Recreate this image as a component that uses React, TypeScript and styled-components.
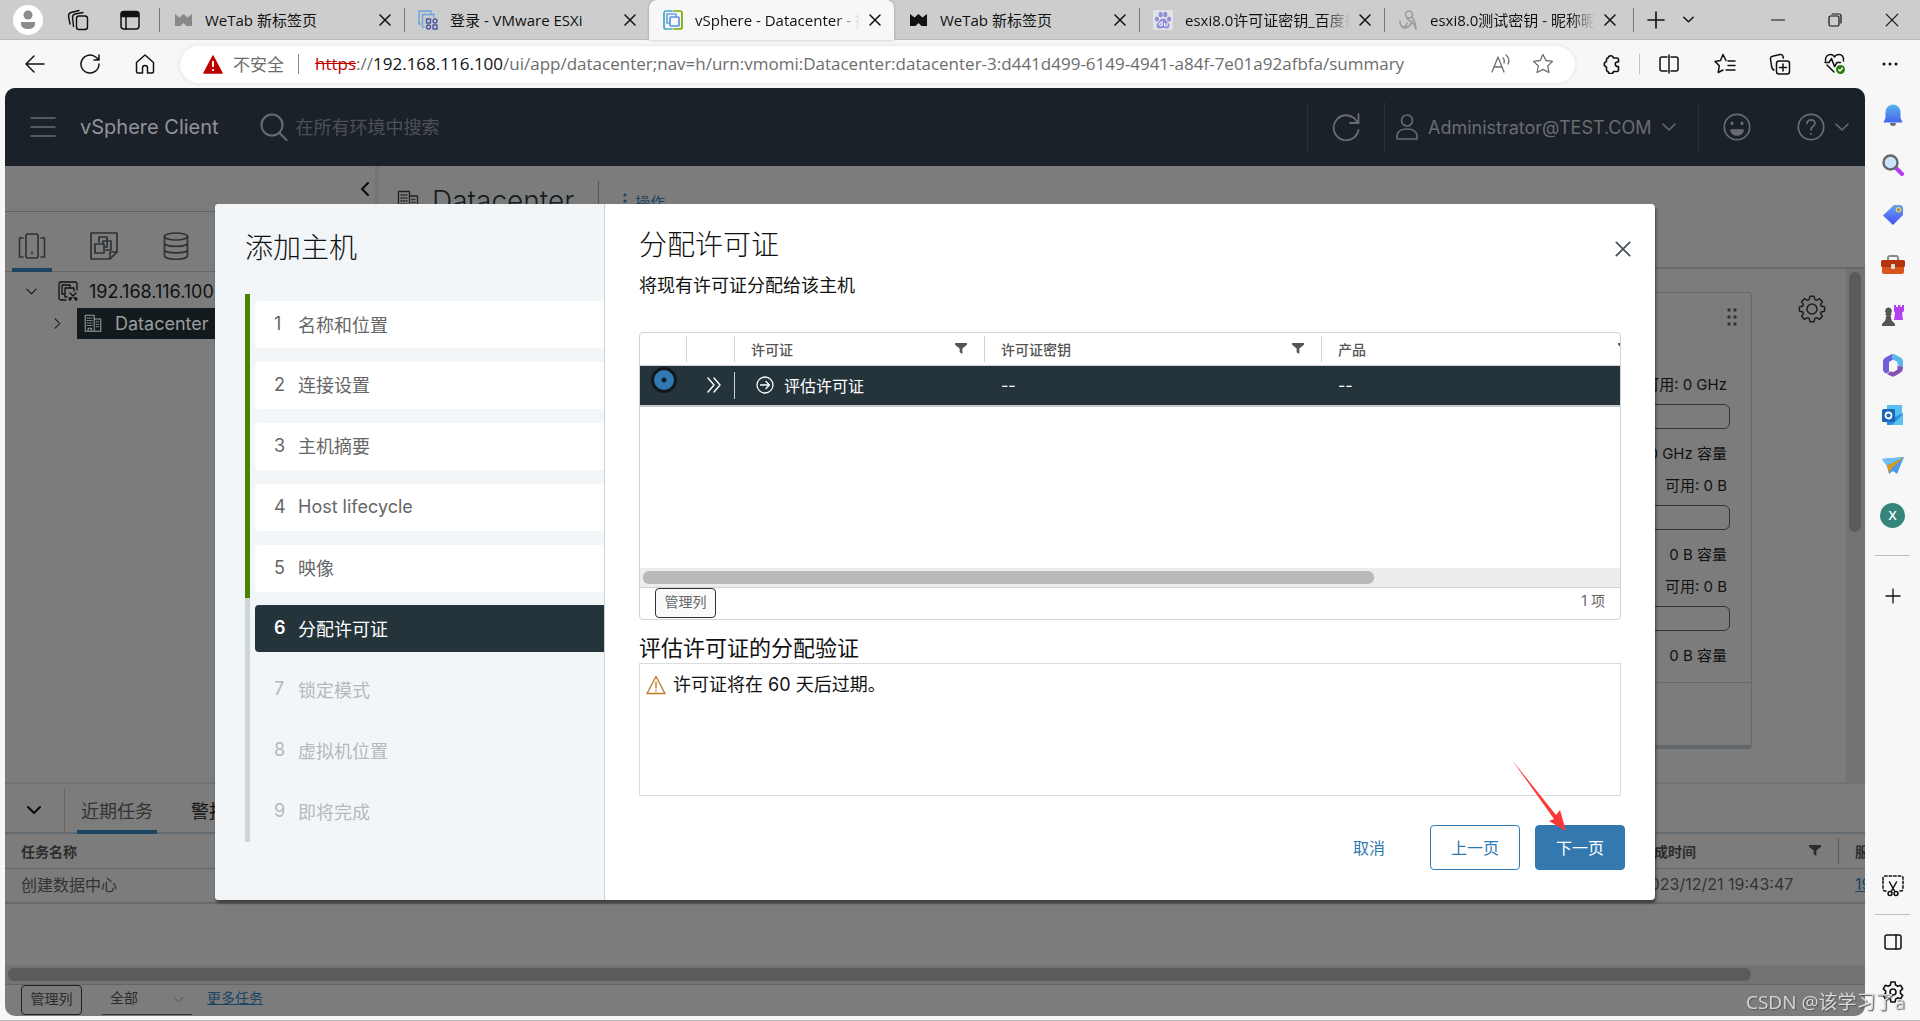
import React from 'react';
import styled, { createGlobalStyle, css } from 'styled-components';

const uiFont = '"Open Sans", "Noto Sans CJK SC", sans-serif';
const appFont = 'Inter, "Noto Sans CJK SC", sans-serif';

const Global = createGlobalStyle`
  * { box-sizing: border-box; }
  html, body { margin: 0; height: 100%; }
  #root { height: 100%; }
  button, input, select { font: inherit; color: inherit; margin: 0; }
  h1, h2, h3, p, ul, ol { margin: 0; padding: 0; font-weight: 400; }
  ul, ol { list-style: none; }
`;

/* ---------- icons ---------- */

type IcoProps = { s?: number; h?: number; sw?: number; vb?: string; children: React.ReactNode };
const Ico = ({ s = 24, h, sw = 1.5, vb = '0 0 24 24', children }: IcoProps) => (
  <svg width={s} height={h ?? s} viewBox={vb} fill="none" stroke="currentColor" strokeWidth={sw}
    strokeLinecap="round" strokeLinejoin="round" aria-hidden="true">{children}</svg>
);

const Close = ({ s = 12, sw = 1.5 }: { s?: number; sw?: number }) => (
  <Ico s={s} sw={sw} vb="0 0 12 12"><path d="M1 1l10 10M11 1L1 11" /></Ico>
);
const Down = ({ s = 14, sw = 1.5 }: { s?: number; sw?: number }) => (
  <Ico s={s} sw={sw} vb="0 0 14 14"><path d="M1 4l6 6 6-6" /></Ico>
);
const Funnel = () => (
  <svg width="12" height="11" viewBox="0 0 13 12" fill="currentColor" aria-hidden="true">
    <path d="M0 0h13v2L8 6v6L5 10V6L0 2z" />
  </svg>
);
const Building = ({ s = 22 }: { s?: number }) => (
  <Ico s={s} sw={1.3} vb="0 0 22 22">
    <path d="M1.500 21V1.500h11V21zM12.500 6H20.500v15h-8M5 21v-3.500h4V21" />
    <path d="M4 5h6M4 8h6M4 11h6M4 14h6M15 9.500h3M15 12.500h3M15 15.500h3" strokeDasharray="1.200 1.600" />
  </Ico>
);
const Gear = ({ s = 28, sw = 1.5 }: { s?: number; sw?: number }) => {
  const pts: string[] = [];
  for (let i = 0; i < 8; i += 1) {
    const a = (i * Math.PI) / 4;
    const p = (r: number, d: number) => `${(14 + r * Math.sin(a + d)).toFixed(2)} ${(14 - r * Math.cos(a + d)).toFixed(2)}`;
    pts.push(`${p(9.800, -0.300)} L${p(12.800, -0.160)} L${p(12.800, 0.160)} L${p(9.800, 0.300)}`);
  }
  return <Ico s={s} sw={sw} vb="0 0 28 28"><path d={`M${pts.join(' L')}Z`} /><circle cx="14" cy="14" r="5" /></Ico>;
};
const RoundGear = () => (
  <Ico s={24} sw={1.6} vb="0 0 24 24">
    <path d="M10 2h4l.6 3 2.200 1.300 2.900-1 2 3.500-2.300 2v2.500l2.300 2-2 3.500-2.900-1-2.200 1.300L14 22h-4l-.6-2.900-2.200-1.300-2.900 1-2-3.500 2.300-2v-2.500l-2.300-2 2-3.500 2.900 1L9.400 5z" />
    <circle cx="12" cy="12" r="3" />
  </Ico>
);
const Crown = ({ color }: { color: string }) => (
  <svg width="17" height="14" viewBox="0 0 17 14" fill={color} aria-hidden="true">
    <path d="M0 1l4.500 3.500L8.500 1l4 3.500L17 1v12h-5.500l-3-3-3 3H0z" />
  </svg>
);
const EsxiMark = () => (
  <Ico s={20} sw={1.4} vb="0 0 20 20">
    <g stroke="#6ba3dd"><path d="M2.500 14H1V1h12v2" /><path d="M6 17H4.500V4.500H16V7" /></g>
    <g stroke="#4a5a9c"><rect x="8.500" y="9" width="4" height="4" /><circle cx="17" cy="11" r="2" /><circle cx="10.500" cy="17" r="2" /><rect x="15" y="15" width="4" height="4" /></g>
  </Ico>
);
const VsphereMark = () => (
  <Ico s={20} sw={1.7} vb="0 0 20 20">
    <path d="M9 1H3a2 2 0 0 0-2 2v14a2 2 0 0 0 2 2h6" stroke="#3fa7c4" />
    <path d="M11 1h6a2 2 0 0 1 2 2v14a2 2 0 0 1-2 2h-6" stroke="#79a900" />
    <path d="M6 13H4V4h9v2" stroke="#6aa5e0" /><rect x="7" y="7" width="9" height="9" rx="1" stroke="#5a96dc" />
  </Ico>
);
const BaiduMark = () => (
  <svg width="20" height="20" viewBox="0 0 20 20" aria-hidden="true">
    <rect width="20" height="20" rx="2" fill="#e2e2e6" />
    <g fill="#8d8fd8"><ellipse cx="4" cy="9" rx="2" ry="2.600" /><ellipse cx="7.700" cy="4.500" rx="2" ry="2.800" /><ellipse cx="12.300" cy="4.500" rx="2" ry="2.800" /><ellipse cx="16" cy="9" rx="2" ry="2.600" />
      <path d="M10 8.500c3 0 3.500 3 5.500 4.800 2 2 .8 5.200-2 5.200-1.500 0-2-.4-3.500-.4s-2 .4-3.500.4c-2.800 0-4-3.200-2-5.200C6.500 11.500 7 8.500 10 8.500z" /></g>
    <path d="M9 11v5M9 14.700a1.500 1.500 0 1 1 0-1M11.500 13v2a1.300 1.300 0 0 0 2.600 0v-2" fill="none" stroke="#fff" strokeWidth="1" />
  </svg>
);
const ScribbleMark = () => (
  <Ico s={18} h={20} sw={1.6} vb="0 0 18 20">
    <g stroke="#9b9b9b"><circle cx="10" cy="4.500" r="3.500" /><path d="M1 11c0 8 6 7 7 2M8 9c4 2 8 5 9 10M13 7c3 3 3.500 7 4 12M4 18c5 0 8-3 9-7" /></g>
  </Ico>
);

/* ---------- browser frame ---------- */

const Browser = styled.div`
  display: flex; flex-direction: column; height: 100vh; min-height: 900px; overflow: hidden;
  background: #f7f7f7; border-bottom: 1px solid #bdbdbd; font-family: ${uiFont}; color: #111;
`;
const IconButton = styled.button<{ $w?: number; $h?: number; $color?: string }>`
  display: inline-flex; align-items: center; justify-content: center; flex: none;
  width: ${p => p.$w ?? 40}px; height: ${p => p.$h ?? 40}px; padding: 0; border: 0;
  background: none; color: ${p => p.$color ?? 'inherit'};
`;
const TabStrip = styled.header`
  display: flex; align-items: stretch; height: 40px; flex: none; background: #cdcdcd; border-bottom: 1px solid #bababa;
`;
const StripActions = styled.div`display: flex; align-items: center; flex: none; width: 159px; padding-left: 3px;`;
const Avatar = styled.span`
  display: flex; align-items: center; justify-content: center; width: 30px; height: 30px; border-radius: 50%; background: #fff;
`;
const Tab = styled.div<{ $active?: boolean; $line?: boolean }>`
  position: relative; display: flex; align-items: center; flex: 0 1 245px; min-width: 0; height: 40px; padding: 0 4px 0 14px; font-size: 15px;
  ${p => p.$active && css`background: #f7f7f7; border-radius: 8px 8px 0 0; box-shadow: 0 0 3px rgba(0,0,0,.25);`}
  &::before { content: ''; position: absolute; left: 0; top: 8px; width: 1px; height: 24px; background: ${p => (p.$line ? '#777' : 'transparent')}; }
`;
const NewTab = styled.div`display: flex; align-items: center; flex: none; padding-left: 4px;`;
const Favicon = styled.span`display: flex; justify-content: center; flex: none; width: 20px; margin-right: 12px;`;
const TabTitle = styled.span<{ $fade?: boolean }>`
  flex: 1; overflow: hidden; white-space: nowrap; line-height: 24px;
  ${p => p.$fade && css`mask-image: linear-gradient(90deg, #000 85%, transparent);`}
`;
const WindowButtons = styled.div`display: flex; flex: none; margin-left: auto;`;
const Rule = styled.span<{ $h: number; $color: string }>`flex: none; width: 1px; height: ${p => p.$h}px; background: ${p => p.$color};`;

const Toolbar = styled.div`display: flex; align-items: center; flex: none; height: 48px; padding: 0 3px 0 7px;`;
const AddressBar = styled.div`
  display: flex; align-items: center; flex: 1; min-width: 0; height: 37px; margin: 0 9px 0 8px; padding: 0 14px 0 23px;
  border-radius: 19px; background: #fff; box-shadow: 0 0 4px rgba(0,0,0,.1); font-size: 17px; color: #6d6d6d;
`;
const Insecure = styled.span`margin: 0 14px 0 10px; padding-bottom: 2px; white-space: nowrap;`;
const Url = styled.span`
  flex: 1; min-width: 0; margin-left: 16px; padding-bottom: 2px; overflow: hidden; white-space: nowrap;
  s { color: #c00000; } b { font-weight: 400; color: #111; }
`;
const Middle = styled.div`display: flex; flex: 1; min-height: 0; padding-left: 5px; margin-bottom: 4px;`;
const EdgeBar = styled.aside`display: flex; flex-direction: column; align-items: center; width: 55px; padding-top: 2px;`;
const EdgeLine = styled.span<{ $gap?: number }>`flex: none; width: 35px; height: 1px; margin: ${p => p.$gap ?? 0}px 0; background: #bdbdbd;`;
const Spacer = styled.span`flex: 1;`;
const Profile = styled.span`
  display: flex; align-items: center; justify-content: center; width: 25px; height: 25px; border-radius: 50%;
  background: #35857a; color: #fff; font-size: 13px; font-weight: 600;
`;

/* ---------- vSphere page ---------- */

const Viewport = styled.div`
  position: relative; display: flex; flex-direction: column; flex: 1; min-width: 0; overflow: hidden;
  border-radius: 10px; background: #7c7c7c; font-family: ${appFont}; color: #333;
`;
const AppHeader = styled.header`display: flex; align-items: center; flex: none; height: 78px; padding: 0 10px 0 18px; background: #1b2129; color: #6a6d70;`;
const Brand = styled.h1`margin: 0 41px 0 17px; font-size: 20px; color: #929497; white-space: nowrap;`;
const SearchInput = styled.input`
  flex: 1; min-width: 0; margin-left: 8px; padding: 0; border: 0; outline: 0; background: none; font-size: 18px;
  &::placeholder { color: #4d5155; opacity: 1; }
`;
const UserMenu = styled.button`
  display: flex; align-items: center; gap: 10px; width: 313px; padding: 0 0 0 11px; border: 0; background: none; font-size: 18px; white-space: nowrap;
`;
const HelpMenu = styled.button`display: flex; align-items: center; gap: 10px; margin-left: 16px; padding: 0 6px; border: 0; background: none;`;

const Main = styled.main`display: flex; flex: 1; min-height: 0; border-bottom: 2px solid #717171;`;
const SideBar = styled.nav`width: 374px; border-right: 4px solid #747474; flex: none;`;
const SideTop = styled.div`display: flex; align-items: center; justify-content: flex-end; height: 46px; border-bottom: 1px solid #5e6163;`;
const SideTabs = styled.div`display: flex; gap: 32px; height: 60px; padding-left: 7px; border-bottom: 1px solid #62696c;`;
const SideTab = styled.button<{ $on?: boolean }>`
  display: flex; align-items: center; justify-content: center; width: 40px; height: 60px; padding: 12px 0 0; border: 0;
  border-bottom: 4px solid ${p => (p.$on ? '#1b4562' : 'transparent')}; background: none; color: #2e3337;
`;
const Tree = styled.div`padding-top: 3px;`;
const TreeRow = styled.div<{ $inset: number }>`display: flex; align-items: center; height: 32px; padding-left: ${p => p.$inset}px; font-size: 18px; color: #111;`;
const TreeNode = styled.span<{ $on?: boolean }>`
  display: flex; align-items: center; flex: 1; gap: 11px; height: 31px; margin-left: 14px; padding-left: 7px;
  ${p => p.$on && css`gap: 13px; background: #131a1e; color: #9a9d9f;`}
`;
const Content = styled.section`display: flex; flex-direction: column; flex: 1; min-width: 0;`;
const ContentHead = styled.div`display: flex; align-items: flex-start; flex: none; height: 103px; padding: 15px 18px 0; border-bottom: 2px solid #676a6c;`;
const ObjectTitle = styled.h2`margin: 0 24px 0 13px; font-size: 28px; line-height: 40px; font-weight: 300; color: #131c22;`;
const Actions = styled.button`display: flex; align-items: center; gap: 8px; height: 40px; margin-left: 24px; padding: 0; border: 0; background: none; color: #1b4562; font-size: 15px;`;
const ContentBody = styled.div`display: flex; flex: 1; min-height: 0; padding-left: 20px;`;
const Card = styled.article`
  display: flex; flex-direction: column; flex: 1; height: 457px; margin-top: 23px;
  border: 1px solid #64696c; border-bottom: 4px solid #61676b; border-radius: 4px;
`;
const CardHead = styled.div`display: flex; justify-content: flex-end; height: 82px; padding: 15px 14px; color: #333;`;
const Meters = styled.div`display: grid; gap: 12px; padding: 0 23px 16px; border-bottom: 1px solid #64696c; font-size: 15px; color: #111;`;
const Meter = styled.div`
  display: grid; line-height: 20px; text-align: right; padding-right: 1px;
  i { height: 25px; margin: 9px -3px 15px 0; border: 1px solid #333; border-radius: 6px; }
`;
const Tools = styled.div`display: flex; justify-content: flex-end; width: 94px; padding: 26px 20px 0 0; color: #1a1f22;`;
const VTrack = styled.div`
  width: 19px; padding: 3px 4px 0 3px; background: #737373;
  i { display: block; height: 260px; border-radius: 6px; background: #5b5b5b; }
`;
const HTrack = styled.div<{ $bg: string; $thumb: string; $len: string }>`
  flex: none; height: 19px; padding: 3px 3px; background: ${p => p.$bg};
  i { display: block; width: ${p => p.$len}; height: 13px; border-radius: 6px; background: ${p => p.$thumb}; }
`;

const TaskPanel = styled.section`display: flex; flex-direction: column; flex: none; height: 232px; padding-top: 4px; color: #2c2c2c;`;
const TaskTabs = styled.div`display: flex; flex: none; height: 46px; border-bottom: 2px solid #636b70;`;
const Toggle = styled.button`display: flex; align-items: center; justify-content: center; width: 60px; padding: 0 2px 0 0; border: 0; border-right: 1px solid #666; background: none; color: #0b0b0b;`;
const TaskTab = styled.button<{ $on?: boolean }>`
  height: 46px; margin-left: 12px; padding: 2px 4px 0; border: 0; border-bottom: 4px solid ${p => (p.$on ? '#1b4562' : 'transparent')};
  background: none; font-size: 18px; color: ${p => (p.$on ? '#333' : '#111')};
  & + & { margin-left: 30px; }
`;
const TaskScroll = styled.div`flex: 1; overflow: hidden;`;
const TaskTable = styled.table`
  width: 100%; table-layout: fixed; border-collapse: collapse; text-align: left; white-space: nowrap;
  th { height: 34px; padding: 0 16px; border-bottom: 1px solid #626262; font-size: 14px; font-weight: 600; overflow: hidden; }
  td { height: 35px; padding: 0 16px 3px; border-bottom: 2px solid #686868; font-size: 16px; overflow: hidden; color: #333; }
  th:last-child, td:last-child { padding-right: 0; }
  a { color: #1b4562; }
`;
const HeadCell = styled.span<{ $line?: string }>`
  display: flex; align-items: center; justify-content: space-between; height: 26px; margin-right: -16px; padding-right: 17px;
  border-right: 1px solid ${p => p.$line ?? 'transparent'};
`;
const GridFoot = styled.div<{ $line: string; $pad: number }>`
  display: flex; align-items: flex-start; flex: none; height: 32px; padding: 0 ${p => p.$pad}px; border-top: 1px solid ${p => p.$line};
  font-size: 14px; line-height: 26px;
`;
const ColumnsButton = styled.button<{ $bg: string; $line: string }>`
  width: 61px; height: 30px; padding: 0 0 2px; border: 1px solid ${p => p.$line}; border-radius: 4px; background: ${p => p.$bg}; font-size: 14px; line-height: 24px;
`;
const Filter = styled.label`
  position: relative; display: flex; width: 90px; height: 30px; margin: 0 15px 0 20px; border-bottom: 1px solid #2c363b;
  select { appearance: none; width: 100%; padding: 0 8px 6px; border: 0; background: none; }
  svg { position: absolute; right: 8px; top: 9px; color: #555; }
`;
const FootLink = styled.a`color: #1b4562;`;

/* ---------- wizard dialog ---------- */

const Backdrop = styled.div`position: absolute; inset: 0; display: flex; align-items: center; justify-content: center;`;
const Dialog = styled.div`
  display: flex; width: 1440px; max-width: 96%; height: 75%; border-radius: 4px; overflow: hidden; background: #fff;
  box-shadow: 1px 3px 3px rgba(0,0,0,.5); color: #111;
`;
const Steps = styled.nav`display: flex; flex-direction: column; width: 390px; flex: none; padding: 0 0 58px 30px; border-right: 1px solid #ccd1d4; background: #f2f6f9;`;
const WizardTitle = styled.h2`height: 90px; padding-top: 23px; font-size: 28px; line-height: 42px; font-weight: 300;`;
const StepList = styled.ol`display: grid; grid-auto-rows: 1fr; flex: 1;`;
type StepState = 'done' | 'current' | 'todo';
const StepItem = styled.li<{ $state: StepState }>`border-left: 5px solid ${p => (p.$state === 'done' ? '#4a8400' : '#ccd5d8')}; padding: 7px 0 0 5px;`;
const StepButton = styled.button<{ $state: StepState }>`
  display: flex; align-items: center; gap: 14px; width: 100%; height: 47px; padding: 0 0 2px 19px; border: 0; border-radius: 4px 0 0 4px;
  font-size: 18px; text-align: left;
  background: ${p => ({ done: '#fff', current: '#25333b', todo: 'transparent' })[p.$state]};
  color: ${p => ({ done: '#666', current: '#fff', todo: '#b3b9bd' })[p.$state]};
  b { width: 10px; font-weight: ${p => (p.$state === 'current' ? 600 : 400)}; }
`;
const Panel = styled.section`display: flex; flex-direction: column; flex: 1; min-width: 0; padding: 20px 30px 30px 34px;`;
const PanelHead = styled.div`
  display: flex; justify-content: space-between;
  h2 { font-size: 28px; line-height: 42px; font-weight: 300; }
  button { margin: 9px -14px 0 0; }
`;
const Lead = styled.p`margin: 8px 0 34px; font-size: 18px; line-height: 24px;`;
const DataGrid = styled.div`display: flex; flex-direction: column; flex: none; height: 288px; margin-right: 4px; border: 1px solid #ccd5d8; border-radius: 4px; overflow: hidden; color: #666;`;
const GridScroll = styled.div`flex: 1; overflow: hidden;`;
const LicenseTable = styled.table`
  width: 1310px; table-layout: fixed; border-collapse: collapse; text-align: left; white-space: nowrap;
  th { height: 32px; padding: 0 16px; border-bottom: 1px solid #ccd5d8; font-size: 14px; font-weight: 500; color: #555; }
  td { height: 41px; padding: 0 16px; border-bottom: 2px solid #c8c8c8; background: #25333b; color: #fff; font-size: 16px; }
  td:nth-child(1) { padding: 0 0 11px 11px; }
  td:nth-child(2) { padding: 0; }
`;
const Radio = styled.input.attrs({ type: 'radio' })`
  appearance: none; display: block; width: 26px; height: 26px; border: 3px solid #10181d; border-radius: 50%;
  background: radial-gradient(circle, #10202b 2px, #3279b3 3px);
`;
const Expand = styled.span`display: flex; align-items: center; justify-content: flex-end; height: 27px; border-right: 1px solid #c3d0d6; padding-right: 12px;`;
const NameCell = styled.label`display: flex; align-items: center; gap: 10px; padding-left: 5px;`;
const CheckTitle = styled.h3`margin-top: 13px; font-size: 22px; line-height: 30px; font-weight: 400;`;
const CheckBox = styled.div`height: 133px; margin-right: 4px; padding: 7px 6px; border: 1px solid #d9dcde; color: #111;`;
const Warning = styled.p`display: flex; align-items: center; gap: 7px; font-size: 18px; line-height: 28px; svg { color: #b98124; }`;
const Buttons = styled.footer`display: flex; justify-content: flex-end; gap: 15px; margin-top: auto;`;
const WizardButton = styled.button<{ $kind?: 'link' | 'outline' | 'primary' }>`
  width: 90px; height: 45px; padding: 0 0 2px; border-radius: 4px; font-size: 16px; border: 1px solid #3279b0; color: #3279b0; background: #fff;
  ${p => p.$kind === 'link' && css`border-color: transparent; margin-right: 1px;`}
  ${p => p.$kind === 'primary' && css`background: #3379b0; color: #fff;`}
`;
const Pointer = styled.svg`position: absolute; right: 296px; bottom: 184px;`;
const Watermark = styled.div`
  position: fixed; right: 15px; bottom: 5px; font-family: ${uiFont}; font-size: 19px; line-height: 28px; color: #d8d8d8; text-shadow: 1px 1px 1px #555; white-space: nowrap;
`;

const tabs = [
  { title: 'WeTab 新标签页', icon: <Crown color="#888" />, line: true },
  { title: '登录 - VMware ESXi', icon: <EsxiMark />, line: true },
  { title: 'vSphere - Datacenter - 摘', icon: <VsphereMark />, active: true, fade: true },
  { title: 'WeTab 新标签页', icon: <Crown color="#111" /> },
  { title: 'esxi8.0许可证密钥_百度搜', icon: <BaiduMark />, line: true, fade: true },
  { title: 'esxi8.0测试密钥 - 昵称昵', icon: <ScribbleMark />, line: true, fade: true },
];

const steps = ['名称和位置', '连接设置', '主机摘要', 'Host lifecycle', '映像', '分配许可证', '锁定模式', '虚拟机位置', '即将完成'];
const meters = [['可用: 0 GHz', '0 GHz 容量'], ['可用: 0 B', '0 B 容量'], ['可用: 0 B', '0 B 容量']];

const edgeApps: [string, React.ReactNode][] = [
  ['通知', <svg width="20" height="24" viewBox="0 0 20 24"><defs><linearGradient id="bell" x2="0" y2="1"><stop stopColor="#5ab4ee" /><stop offset="1" stopColor="#4364ee" /></linearGradient></defs><path d="M7 20a3 3 0 0 0 6 0z" fill="#6b6b74" /><path d="M2.500 9a7.500 7.500 0 0 1 15 0v6l2 4.500H.5l2-4.500z" fill="url(#bell)" /></svg>],
  ['搜索', <svg width="22" height="22" viewBox="0 0 22 22"><path d="M14 14l6 6" stroke="#b53cf2" strokeWidth="4" strokeLinecap="round" /><circle cx="8.500" cy="8.500" r="7" fill="#c9e4fb" stroke="#65686d" strokeWidth="2.400" /></svg>],
  ['购物', <svg width="22" height="22" viewBox="0 0 22 22"><defs><linearGradient id="tag" x2="0" y2="1"><stop stopColor="#62a4f8" /><stop offset="1" stopColor="#4a4df2" /></linearGradient></defs><path d="M12 1h7l2 2v8L11 21 1 11.500z" fill="url(#tag)" /><circle cx="16.500" cy="5.700" r="2" fill="#4c6cf0" stroke="#f5cf3c" strokeWidth="1.500" /></svg>],
  ['工具', <svg width="24" height="20" viewBox="0 0 24 20"><path d="M7 6V3a2 2 0 0 1 2-2h6a2 2 0 0 1 2 2v3" fill="none" stroke="#8c8c8c" strokeWidth="2" /><rect x="1" y="10" width="22" height="9" rx="2" fill="#d9541c" /><rect y="5" width="24" height="7" rx="1.500" fill="#b53410" /><rect x="10" y="9" width="4" height="5" rx="1" fill="#dcdcdc" /></svg>],
  ['游戏', <svg width="24" height="24" viewBox="0 0 24 24"><path d="M13 2h2v2h2V2h2.500v2H21V2h2v6l-2 2 1 7h-9l1-7-1-2z" fill="#b341f0" /><path d="M7.500 4.500a3.500 3.500 0 0 1 2.300 6L11 12H9.500l1.200 5.500L14 21v2H1v-2l3.300-3.500L5.500 12H4l1.200-1.500a3.500 3.500 0 0 1 2.300-6z" fill="#555" /></svg>],
  ['Microsoft 365', <svg width="22" height="24" viewBox="0 0 22 24"><path d="M10 1L3.500 4.500C1.500 6 1 7 1 9v7c0 2 1 3.500 3 4.500l3-1.500V9l5-3V1z" fill="#6d5fd6" /><path d="M10 1h2l6.500 3.500C20.500 6 21 7 21 9v6l-5.500-3.500V9L10 6z" fill="#58b7ea" /><path d="M21 14c0 3-.5 4.500-3 6l-6 3.500h-2L4 20.500c2 .5 3-.5 3.500-2l4 .5 4-2.500v-4z" fill="#8651b5" /></svg>],
  ['Outlook', <svg width="22" height="22" viewBox="0 0 22 22"><rect x="5" y="1" width="15" height="12" fill="#58bdf0" /><path d="M4 9l9 4 8-4v11a1 1 0 0 1-1 1H5z" fill="#2e8ce0" /><path d="M21 10v11H10z" fill="#5cc0f2" /><rect y="5" width="13" height="13" rx="1.500" fill="#1766b8" /><circle cx="6.500" cy="11.500" r="3" fill="none" stroke="#fff" strokeWidth="1.800" /></svg>],
  ['发送', <svg width="22" height="19" viewBox="0 0 22 19"><path d="M0 3L22 1 15 18l-4-3-4 3-2-8z" fill="#4a9be8" /><path d="M22 1L5 9.500 7 17l3-5z" fill="#d89a1d" /><path d="M0 3L22 1 5 9.500z" fill="#6fc0f5" /></svg>],
];

export default function App() {
  return (
    <Browser>
      <Global />
      <TabStrip>
        <StripActions>
          <IconButton $w={50} aria-label="个人资料"><Avatar><svg width="16" height="20" viewBox="0 0 16 20" fill="#8c8c8c"><circle cx="8" cy="5" r="4.500" /><path d="M1 12h14v2c0 3-3 5-7 5s-7-2-7-5z" /></svg></Avatar></IconButton>
          <IconButton $w={50} aria-label="工作区"><Ico s={22} sw={1.4} vb="0 0 22 22"><rect x="9.500" y="7" width="11" height="13.500" rx="2.500" /><path d="M6.500 17.500l-1-9c0-2 1-3 2.500-3.500L16 3.500M3 15L1.500 7c0-2 .5-3 2.500-3.500L12 1.500" /></Ico></IconButton>
          <IconButton $w={54} aria-label="标签操作"><Ico s={20} sw={1.5} vb="0 0 20 20"><rect x="1" y="1.500" width="18" height="17.500" rx="3" /><path d="M1.500 2.500h17v4h-17z" fill="currentColor" /><path d="M6 7v12" /></Ico></IconButton>
        </StripActions>
        {tabs.map((t, i) => (
          <Tab key={i} $active={t.active} $line={t.line}>
            <Favicon>{t.icon}</Favicon><TabTitle $fade={t.fade}>{t.title}</TabTitle>
            <IconButton $w={30} aria-label="关闭标签页"><Close /></IconButton>
          </Tab>
        ))}
        <NewTab>
          <Rule $h={24} $color="#777" />
          <IconButton $w={44} aria-label="新建标签页"><Ico s={18} sw={1.6} vb="0 0 18 18"><path d="M9 1v16M1 9h16" /></Ico></IconButton>
          <IconButton $w={20} aria-label="标签列表"><Down s={11} sw={1.8} /></IconButton>
        </NewTab>
        <WindowButtons>
          <IconButton $w={57} aria-label="最小化"><Ico s={14} sw={1.2} vb="0 0 14 14"><path d="M0 7h14" /></Ico></IconButton>
          <IconButton $w={57} aria-label="最大化"><Ico s={14} sw={1.2} vb="0 0 14 14"><rect x="1" y="3" width="10" height="10" rx="1.500" /><path d="M4 1h7a2 2 0 0 1 2 2v7" /></Ico></IconButton>
          <IconButton $w={57} aria-label="关闭"><Close s={14} sw={1} /></IconButton>
        </WindowButtons>
      </TabStrip>

      <Toolbar>
        <IconButton $w={55} aria-label="后退"><Ico s={20} sw={1.5} vb="0 0 20 20"><path d="M19 10H1M9 2l-8 8 8 8" /></Ico></IconButton>
        <IconButton $w={55} aria-label="刷新"><Ico s={20} sw={1.5} vb="0 0 20 20"><path d="M19 10a9 9 0 1 1-3-6.700L19 6M19 1v5h-5" /></Ico></IconButton>
        <IconButton $w={55} aria-label="主页"><Ico s={20} sw={1.5} vb="0 0 20 20"><path d="M1.500 8.500L10 1l8.500 7.500V17.500a1.500 1.500 0 0 1-1.500 1.500h-4.500v-5a2.500 2.500 0 0 0-5 0v5H3a1.500 1.500 0 0 1-1.500-1.500z" /></Ico></IconButton>
        <AddressBar>
          <svg width="20" height="19" viewBox="0 0 20 19" aria-hidden="true"><path d="M10 1L19 18H1z" fill="#c00000" stroke="#c00000" strokeWidth="1.500" strokeLinejoin="round" /><path d="M10 6v6M10 14v2" stroke="#fff" strokeWidth="1.800" /></svg>
          <Insecure>不安全</Insecure><Rule $h={20} $color="#8a8a8a" />
          <Url role="textbox" aria-label="地址"><s>https</s>://<b>192.168.116.100</b>/ui/app/datacenter;nav=h/urn:vmomi:Datacenter:datacenter-3:d441d499-6149-4941-a84f-7e01a92afbfa/summary</Url>
          <IconButton $w={49} $h={36} aria-label="大声朗读"><Ico s={20} sw={1.3} vb="0 0 20 20"><path d="M1 18L7 3l6 15M3 13h8M12 4c1.500 1.500 1.500 3.500 1 5M15 1c3 2.500 3.500 6 2 9" /></Ico></IconButton>
          <IconButton $w={36} $h={36} aria-label="收藏"><Ico s={22} sw={1.3} vb="0 0 22 22"><path d="M11 1.500l2.900 6 6.600.9-4.800 4.600 1.200 6.500L11 16.400l-5.900 3.100 1.200-6.500L1.500 8.400l6.600-.9z" /></Ico></IconButton>
        </AddressBar>
        <IconButton $w={55} aria-label="扩展"><Ico s={20} sw={1.6} vb="0 0 20 20"><path d="M6 4a2.800 2.800 0 0 1 5.500 0H15a1.500 1.500 0 0 1 1.500 1.500V8h-1a2.200 2.200 0 0 0 0 4.500h1V16a1.500 1.500 0 0 1-1.500 1.500h-3.500a2.800 2.800 0 0 1-5.500 0A1.500 1.500 0 0 1 4.500 16v-3a2.800 2.800 0 0 1 0-5.500v-2A1.500 1.500 0 0 1 6 4z" /></Ico></IconButton>
        <Rule $h={20} $color="#c4c4c4" />
        <IconButton $w={57} aria-label="拆分屏幕"><Ico s={20} sw={1.5} vb="0 0 20 20"><path d="M8 3H3a2 2 0 0 0-2 2v10a2 2 0 0 0 2 2h5M12 3h5a2 2 0 0 1 2 2v10a2 2 0 0 1-2 2h-5M10 1v18" /></Ico></IconButton>
        <IconButton $w={55} aria-label="收藏夹"><Ico s={22} sw={1.5} vb="0 0 22 22"><path d="M12 7.500L9 1.500l-2.500 6-5.500.9 4.300 4.300L4.200 19.500 9 17M14 8h7M14 12.500h7M12 17h9" /></Ico></IconButton>
        <IconButton $w={55} aria-label="集锦"><Ico s={22} sw={1.5} vb="0 0 22 22"><rect x="7.500" y="8" width="13" height="13" rx="2.500" /><path d="M14 11v7M10.500 14.500h7M5 17c-1.500-.5-2-1.500-2.300-3L1.500 6c-.2-1.500.5-2.500 2-2.800L11 1.500c1.500-.3 2.700.4 3 2l.3 1.500" /></Ico></IconButton>
        <IconButton $w={55} aria-label="浏览器概要"><Ico s={22} sw={1.5} vb="0 0 22 22"><path d="M1.500 8C1 3.500 4 1.500 6.500 1.500S10 3 10.500 4C11 3 12 1.500 15 1.500S20 4 19.500 8M3 12l7 7M1 9.500h4l2.500-4 3 8 2.500-4h3.500" /><circle cx="16.500" cy="16.500" r="4.500" fill="#2c7c12" stroke="none" /><path d="M14.800 16.700l1.200 1.200 2.300-2.600" stroke="#fff" /></Ico></IconButton>
        <IconButton $w={55} aria-label="设置及其他"><svg width="18" height="4" viewBox="0 0 18 4" fill="currentColor"><circle cx="3" cy="2" r="1.500" /><circle cx="9" cy="2" r="1.500" /><circle cx="15" cy="2" r="1.500" /></svg></IconButton>
      </Toolbar>

      <Middle>
        <Viewport>
          <AppHeader>
            <IconButton aria-label="菜单"><Ico s={26} h={20} sw={1.5} vb="0 0 26 20"><path d="M1 1h24M1 10h24M1 19h24" /></Ico></IconButton>
            <Brand>vSphere Client</Brand>
            <Ico s={28} sw={2} vb="0 0 28 28"><circle cx="12" cy="12" r="10.500" /><path d="M19.500 20l7 7" /></Ico>
            <SearchInput aria-label="搜索" placeholder="在所有环境中搜索" />
            <Rule $h={50} $color="#2a2f36" />
            <IconButton $w={76} aria-label="刷新页面"><Ico s={28} sw={1.8} vb="0 0 28 28"><path d="M26.500 17A12.500 12.500 0 1 1 22 5l4 4.500M26.500 1v9H18" /></Ico></IconButton>
            <Rule $h={50} $color="#2a2f36" />
            <UserMenu>
              <Ico s={22} h={26} sw={1.6} vb="0 0 22 26"><circle cx="11" cy="6.500" r="5.500" /><path d="M1 25v-4c1-4 5-6 10-6s9 2 10 6v4z" /></Ico>
              Administrator@TEST.COM<Down s={14} />
            </UserMenu>
            <Rule $h={50} $color="#2a2f36" />
            <IconButton $w={76} aria-label="反馈"><Ico s={28} sw={1.7} vb="0 0 28 28"><circle cx="14" cy="14" r="12.700" /><path d="M8 17h12c0 3-3 5-6 5s-6-2-6-5z" fill="currentColor" /><path d="M9 10v.5M19 10v.5" strokeWidth="3" /></Ico></IconButton>
            <HelpMenu aria-label="帮助">
              <Ico s={28} sw={1.7} vb="0 0 28 28"><circle cx="14" cy="14" r="12.700" /><path d="M10 10.500c0-5 8.500-4.500 8 0-.3 2.500-4 3-4 6.500M14 20.500v.5" /></Ico><Down s={14} />
            </HelpMenu>
          </AppHeader>

          <Main>
            <SideBar>
              <SideTop><IconButton $w={20} aria-label="收起" $color="#0b0b0b"><Ico s={14} sw={2} vb="0 0 14 14"><path d="M10 1L4 7l6 6" /></Ico></IconButton></SideTop>
              <SideTabs>
                <SideTab $on aria-label="主机和集群"><Ico s={28} sw={1.6} vb="0 0 28 28"><rect x="8" y="2" width="12" height="24" rx="1.500" /><path d="M5 6H1.500v19H5M23 6h3.500v19H23M14 20v1.500" /></Ico></SideTab>
                <SideTab aria-label="虚拟机"><Ico s={28} sw={1.7} vb="0 0 28 28"><path d="M1 1h26v19l-7 7H1zM20 27v-7h7" /><path d="M9 10V5h8v10h-3M13 12V9h8v9h-5" /><rect x="5" y="12" width="9" height="9" /></Ico></SideTab>
                <SideTab aria-label="存储"><Ico s={26} h={28} sw={1.7} vb="0 0 26 28"><ellipse cx="13" cy="4.500" rx="11.500" ry="3.500" /><path d="M1.500 4.500v19c0 5 23 5 23 0v-19M1.500 11c0 4.500 23 4.500 23 0M1.500 17.500c0 4.500 23 4.500 23 0" /></Ico></SideTab>
              </SideTabs>
              <Tree>
                <TreeRow $inset={21}><Down s={11} sw={1.3} />
                  <TreeNode><Ico s={20} sw={1.3} vb="0 0 20 20"><path d="M8 19H3a2 2 0 0 1-2-2V3a2 2 0 0 1 2-2h14a2 2 0 0 1 2 2v6" /><path d="M6 13H4V4h8v2M9 16H7V7h9v3" /><path d="M12 12l6 6M18 12l-6 6" /><circle cx="12" cy="18" r="1" /><circle cx="18" cy="18" r="1" /></Ico>192.168.116.100</TreeNode>
                </TreeRow>
                <TreeRow $inset={47}><Ico s={11} sw={1.3} vb="0 0 14 14"><path d="M4 1l6 6-6 6" /></Ico>
                  <TreeNode $on><Building s={18} />Datacenter</TreeNode>
                </TreeRow>
              </Tree>
            </SideBar>
            <Content>
              <ContentHead>
                <IconButton as="span" $w={22} $color="#222"><Building /></IconButton>
                <ObjectTitle>Datacenter</ObjectTitle><Rule $h={40} $color="#555" />
                <Actions><svg width="4" height="16" viewBox="0 0 4 16" fill="currentColor"><circle cx="2" cy="2" r="1.600" /><circle cx="2" cy="8" r="1.600" /><circle cx="2" cy="14" r="1.600" /></svg>操作</Actions>
              </ContentHead>
              <ContentBody>
                <Card>
                  <CardHead><svg width="10" height="18" viewBox="0 0 10 18" fill="currentColor">{[2, 9, 16].map(y => <g key={y}><circle cx="2" cy={y} r="1.700" /><circle cx="8" cy={y} r="1.700" /></g>)}</svg></CardHead>
                  <Meters>{meters.map(([free, cap], i) => <Meter key={i}><span>{free}</span><i /><span>{cap}</span></Meter>)}</Meters>
                </Card>
                <Tools><Gear s={28} /></Tools>
                <VTrack><i /></VTrack>
              </ContentBody>
            </Content>
          </Main>

          <TaskPanel>
            <TaskTabs>
              <Toggle aria-label="收起任务"><Down s={14} sw={2} /></Toggle>
              <TaskTab $on>近期任务</TaskTab><TaskTab>警报</TaskTab>
            </TaskTabs>
            <TaskScroll>
              <TaskTable>
                <colgroup><col width="240" /><col /><col width="215" /><col width="26" /></colgroup>
                <thead><tr>
                  <th><HeadCell>任务名称<Funnel /></HeadCell></th><th />
                  <th><HeadCell $line="#5a5a5a">完成时间<Funnel /></HeadCell></th><th>服务器</th>
                </tr></thead>
                <tbody><tr><td>创建数据中心</td><td /><td>2023/12/21 19:43:47</td><td><a href="#server">192.168.116.100</a></td></tr></tbody>
              </TaskTable>
            </TaskScroll>
            <HTrack $bg="#737373" $thumb="#5b5b5b" $len="94%"><i /></HTrack>
            <GridFoot $line="#626669" $pad={16}>
              <ColumnsButton $bg="transparent" $line="#222">管理列</ColumnsButton>
              <Filter><select aria-label="任务筛选"><option>全部</option></select><Down s={11} sw={1.2} /></Filter>
              <FootLink href="#more">更多任务</FootLink>
            </GridFoot>
          </TaskPanel>

          <Backdrop>
            <Dialog role="dialog" aria-label="添加主机">
              <Steps>
                <WizardTitle>添加主机</WizardTitle>
                <StepList>
                  {steps.map((s, i) => {
                    const state: StepState = i < 5 ? 'done' : i === 5 ? 'current' : 'todo';
                    return <StepItem key={s} $state={state}><StepButton $state={state}><b>{i + 1}</b>{s}</StepButton></StepItem>;
                  })}
                </StepList>
              </Steps>
              <Panel>
                <PanelHead><h2>分配许可证</h2><IconButton aria-label="关闭" $color="#44525c" $w={32} $h={32}><Close s={16} sw={1.3} /></IconButton></PanelHead>
                <Lead>将现有许可证分配给该主机</Lead>
                <DataGrid>
                  <GridScroll>
                    <LicenseTable>
                      <colgroup><col width="47" /><col width="48" /><col width="250" /><col width="337" /><col width="326" /><col width="302" /></colgroup>
                      <thead><tr>
                        <th><HeadCell $line="#ccd5d8" /></th><th><HeadCell $line="#ccd5d8" /></th>
                        <th><HeadCell $line="#ccd5d8">许可证<Funnel /></HeadCell></th>
                        <th><HeadCell $line="#ccd5d8">许可证密钥<Funnel /></HeadCell></th>
                        <th><HeadCell $line="#ccd5d8">产品<Funnel /></HeadCell></th><th />
                      </tr></thead>
                      <tbody><tr>
                        <td><Radio id="license" name="license" defaultChecked /></td>
                        <td><Expand><Ico s={16} sw={1.4} vb="0 0 16 16"><path d="M2 1l6 7-6 7M8 1l6 7-6 7" /></Ico></Expand></td>
                        <td><NameCell htmlFor="license"><Ico s={18} sw={1.3} vb="0 0 18 18"><circle cx="9" cy="9" r="8" /><path d="M4.500 9h9M10 5.500L13.500 9 10 12.500" /></Ico>评估许可证</NameCell></td>
                        <td>--</td><td>--</td><td />
                      </tr></tbody>
                    </LicenseTable>
                  </GridScroll>
                  <HTrack $bg="#ededed" $thumb="#bababa" $len="75%"><i /></HTrack>
                  <GridFoot $line="#ccd5d8" $pad={15}>
                    <ColumnsButton $bg="#fafafa" $line="#333">管理列</ColumnsButton><Spacer />1 项
                  </GridFoot>
                </DataGrid>
                <CheckTitle>评估许可证的分配验证</CheckTitle>
                <CheckBox><Warning><Ico s={20} sw={1.4} vb="0 0 20 20"><path d="M10 1.500L19 18.500H1zM10 7v6M10 15.500v.5" /></Ico>许可证将在 60 天后过期。</Warning></CheckBox>
                <Buttons>
                  <WizardButton $kind="link">取消</WizardButton>
                  <WizardButton $kind="outline">上一页</WizardButton>
                  <WizardButton $kind="primary">下一页</WizardButton>
                </Buttons>
              </Panel>
            </Dialog>
            <Pointer width="58" height="72" viewBox="0 0 58 72" aria-hidden="true"><path d="M1 0L45 55l4-5 6 21-17-10 5-2z" fill="#fb3838" /></Pointer>
          </Backdrop>
        </Viewport>

        <EdgeBar>
          {edgeApps.map(([label, icon]) => <IconButton key={label} $h={50} aria-label={label}>{icon}</IconButton>)}
          <IconButton $h={50} aria-label="账户"><Profile>X</Profile></IconButton>
          <EdgeLine $gap={15} />
          <IconButton $h={50} aria-label="添加"><Ico s={16} sw={1.3} vb="0 0 16 16"><path d="M8 1v14M1 8h14" /></Ico></IconButton>
          <Spacer />
          <IconButton $h={56} aria-label="屏幕截图"><Ico s={22} sw={1.5} vb="0 0 22 22"><path d="M1 5V3a2 2 0 0 1 2-2h16a2 2 0 0 1 2 2v11a2 2 0 0 1-2 2h-1M4 16H3a2 2 0 0 1-2-2V5" strokeDasharray="2.500 2" /><path d="M7.500 7l5 9M14.500 7l-5 9" /><circle cx="8" cy="18.500" r="2" /><circle cx="14" cy="18.500" r="2" /></Ico></IconButton>
          <EdgeLine />
          <IconButton $h={53} aria-label="边栏"><Ico s={18} sw={1.5} vb="0 0 18 18"><rect x="1" y="2" width="16" height="14" rx="2" /><path d="M12 2v14" /></Ico></IconButton>
          <IconButton $h={48} aria-label="设置"><RoundGear /></IconButton>
        </EdgeBar>
      </Middle>
      <Watermark>CSDN @该学习了a</Watermark>
    </Browser>
  );
}
